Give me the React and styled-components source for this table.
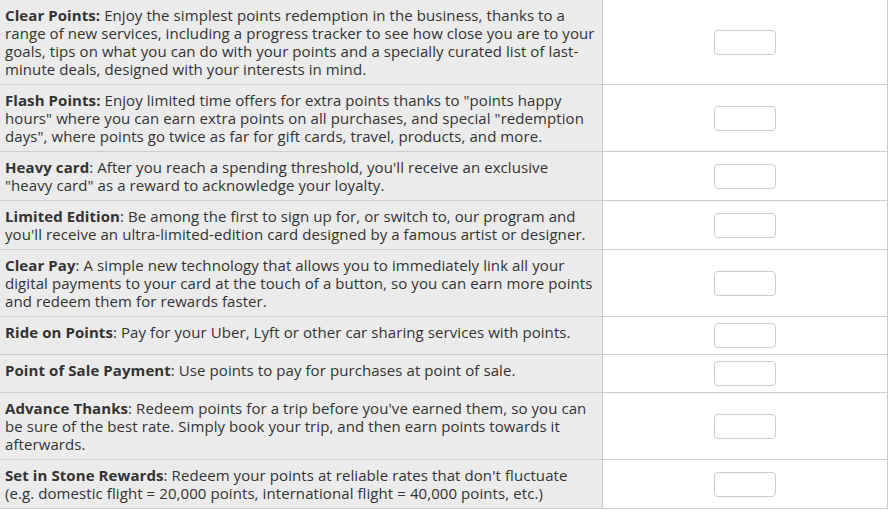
import React from 'react';
import styled, { createGlobalStyle } from 'styled-components';

const GlobalStyle = createGlobalStyle`
  body {
    margin: 0;
    background: #fff;
    font-family: "Open Sans", "Liberation Sans", Arial, sans-serif;
  }
`;

// lines are broken where the original table breaks them
const features = [
  {
    name: 'Clear Points:',
    lines: [
      ' Enjoy the simplest points redemption in the business, thanks to a',
      'range of new services, including a progress tracker to see how close you are to your',
      'goals, tips on what you can do with your points and a specially curated list of last-',
      'minute deals, designed with your interests in mind.',
    ],
  },
  {
    name: 'Flash Points:',
    lines: [
      ' Enjoy limited time offers for extra points thanks to "points happy',
      'hours" where you can earn extra points on all purchases, and special "redemption',
      'days", where points go twice as far for gift cards, travel, products, and more.',
    ],
  },
  {
    name: 'Heavy card',
    lines: [
      ": After you reach a spending threshold, you'll receive an exclusive",
      '"heavy card" as a reward to acknowledge your loyalty.',
    ],
  },
  {
    name: 'Limited Edition',
    lines: [
      ': Be among the first to sign up for, or switch to, our program and',
      "you'll receive an ultra-limited-edition card designed by a famous artist or designer.",
    ],
  },
  {
    name: 'Clear Pay',
    lines: [
      ': A simple new technology that allows you to immediately link all your',
      'digital payments to your card at the touch of a button, so you can earn more points',
      'and redeem them for rewards faster.',
    ],
  },
  {
    name: 'Ride on Points',
    lines: [': Pay for your Uber, Lyft or other car sharing services with points.'],
  },
  {
    name: 'Point of Sale Payment',
    lines: [': Use points to pay for purchases at point of sale.'],
  },
  {
    name: 'Advance Thanks',
    lines: [
      ": Redeem points for a trip before you've earned them, so you can",
      'be sure of the best rate. Simply book your trip, and then earn points towards it',
      'afterwards.',
    ],
  },
  {
    name: 'Set in Stone Rewards',
    lines: [
      ": Redeem your points at reliable rates that don't fluctuate",
      '(e.g. domestic flight = 20,000 points, international flight = 40,000 points, etc.)',
    ],
  },
];

const App = () => (
  <>
    <GlobalStyle />
    <Grid>
      {features.map(f => (
        <Row key={f.name}>
          <Label>
            <Name>{f.name}</Name>
            {f.lines.map((line, i) => (
              <React.Fragment key={i}>
                {i > 0 && <br />}
                {line}
              </React.Fragment>
            ))}
          </Label>
          <AnswerCell>
            <RankInput type="text" aria-label={f.name} />
          </AnswerCell>
        </Row>
      ))}
    </Grid>
  </>
);

const Grid = styled.div`
  width: 888px;
  border-right: 1px solid #cccccc;
  box-sizing: border-box;
`;

const Row = styled.div`
  display: grid;
  grid-template-columns: 603px 284px;
  border-bottom: 1px solid #cccccc;
`;

const Label = styled.div`
  background: #ebebeb;
  border-right: 1px solid #cccccc;
  padding: 6px 2px 6px 5px;
  font-size: 15px;
  line-height: 18px;
  letter-spacing: 0.08px;
  color: #333333;
`;

const Name = styled.strong`
  font-weight: 700;
  color: #333333;
`;

const AnswerCell = styled.div`
  display: flex;
  align-items: center;
  justify-content: center;
  padding: 6px 0;
`;

const RankInput = styled.input`
  width: 62px;
  height: 25px;
  box-sizing: border-box;
  border: 1px solid #cccccc;
  border-radius: 4px;
  background: #fff;
  margin-left: -1px;
  padding: 0 4px;
  outline: none;
`;

export default App;
